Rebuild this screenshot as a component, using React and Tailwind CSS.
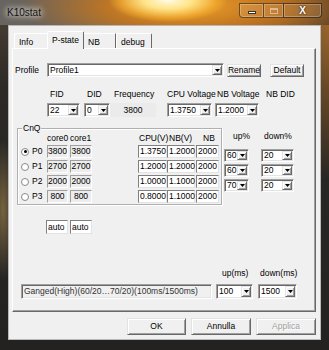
import React from "react";

const sunken =
  "border border-t-[#a0a0a0] border-l-[#a0a0a0] border-r-white border-b-white shadow-[inset_1px_1px_0_#696969,inset_-1px_-1px_0_#e3e3e3]";
const raised =
  "border border-t-[#e3e3e3] border-l-[#e3e3e3] border-r-[#696969] border-b-[#696969] shadow-[inset_1px_1px_0_#fff,inset_-1px_-1px_0_#a0a0a0]";

const Arrow = () => (
  <svg width="5" height="3" viewBox="0 0 5 3">
    <path d="M0 0h5L2.5 3z" fill="#000" />
  </svg>
);

const Combo = ({ value, className }) => (
  <div className={`flex p-[1px] bg-white ${sunken} ${className}`}>
    <span className="flex-1 self-center pl-[1px] whitespace-nowrap">{value}</span>
    <span className={`flex w-[10px] items-center justify-center bg-[#f0f0f0] ${raised}`}>
      <Arrow />
    </span>
  </div>
);

const Button = ({ children, className, disabled }) => (
  <div
    className={`flex items-center justify-center bg-[#f0f0f0] ${raised} ${
      disabled ? "text-[#a0a0a0] [text-shadow:1px_1px_0_#fff]" : ""
    } ${className}`}
  >
    {children}
  </div>
);

const rows = [
  { p: "P0", c0: "3800", c1: "3800", v: "1.3750", nbv: "1.2000", nb: "2000", on: true },
  { p: "P1", c0: "2700", c1: "2700", v: "1.2000", nbv: "1.2000", nb: "2000" },
  { p: "P2", c0: "2000", c1: "2000", v: "1.0000", nbv: "1.1000", nb: "2000" },
  { p: "P3", c0: "800", c1: "800", v: "0.8000", nbv: "1.1000", nb: "2000" },
];

const ups = [
  ["60", "20"],
  ["60", "20"],
  ["70", "20"],
];

const coreCell =
  "flex items-center justify-center bg-[#ececec] border border-t-[#a0a0a0] border-l-[#a0a0a0] border-r-white border-b-white";
const editCell =
  "flex items-center pl-[1px] bg-white border border-t-[#808080] border-l-[#808080] border-r-[#e3e3e3] border-b-[#e3e3e3]";

export default function App() {
  return (
    <div className="w-[329px] h-[350px] overflow-hidden bg-[radial-gradient(ellipse_60px_160px_at_329px_20px,rgba(190,120,40,0.7)_0%,transparent_100%),radial-gradient(ellipse_14px_70px_at_3px_210px,rgba(170,140,80,0.6)_0%,transparent_100%),linear-gradient(180deg,#4e4236_0%,#2c2926_25%,#232221_100%)] font-['Liberation_Sans',Arial,sans-serif] text-[8.5px] leading-none text-black">
      {/* title bar */}
      <div className="flex h-[25px] items-start bg-[radial-gradient(ellipse_60px_22px_at_168px_0px,#fffbe6_0%,#ffe58a_40%,rgba(250,180,50,0.6)_80%,transparent_100%),radial-gradient(ellipse_170px_45px_at_190px_6px,#eda02a_0%,rgba(200,120,30,0.85)_50%,transparent_100%),linear-gradient(90deg,#67635e_0%,#6c6258_30%,#8a5e2c_55%,#8a5828_80%,#56402c_100%)]">
        <span className="ml-[7px] mt-[8px] text-[10px] text-[#111] [text-shadow:0_0_5px_#fff,0_0_8px_#fff]">
          K10stat
        </span>
        <div className="ml-auto mr-[7px] mt-[3px] flex h-[15px]">
          <div className="flex w-[24px] items-center justify-center rounded-bl-[4px] border border-r-0 border-[rgba(40,30,20,0.6)] bg-[rgba(255,255,255,0.1)] shadow-[inset_0_0_0_1px_rgba(255,255,255,0.25)]">
            <div className="mt-[3px] h-[3px] w-[8px] border border-[#333] bg-white" />
          </div>
          <div className="flex w-[20px] items-center justify-center border border-r-0 border-[rgba(40,30,20,0.6)] bg-[rgba(255,255,255,0.1)] shadow-[inset_0_0_0_1px_rgba(255,255,255,0.25)]">
            <div className="h-[6px] w-[8px] border border-t-2 border-[rgba(255,255,255,0.45)]" />
          </div>
          <div className="flex w-[39px] items-center justify-center rounded-br-[4px] border border-[rgba(40,30,20,0.7)] bg-[rgba(255,255,255,0.08)] shadow-[inset_0_0_0_1px_rgba(255,255,255,0.25)]">
            <span className="text-[10px] font-bold text-white [text-shadow:0_0_2px_#000]">X</span>
          </div>
        </div>
      </div>

      {/* client area */}
      <div className="mx-[8px] h-[315px] border border-[#b8b8b8] bg-[#f0f0f0] px-[3px] pt-[6px]">
        {/* tabs */}
        <div className="ml-[2px] flex h-[16px] items-end">
          <div className="h-[15px] w-[33px] rounded-tl-[2px] border-l border-t border-white pl-[4px] pt-[4px]">Info</div>
          <div className="relative z-10 -mb-[1px] h-[18px] w-[37px] rounded-t-[2px] border-l border-t border-r border-l-white border-t-white border-r-[#696969] bg-[#f0f0f0] pl-[4px] pt-[4px]">
            P-state
          </div>
          <div className="h-[15px] w-[32px] border-t border-r border-t-white border-r-[#696969] pl-[4px] pt-[4px]">NB</div>
          <div className="h-[15px] w-[36px] rounded-tr-[2px] border-l border-t border-r border-l-white border-t-white border-r-[#696969] pl-[4px] pt-[4px]">
            debug
          </div>
        </div>

        {/* tab panel */}
        <div className="h-[264px] w-[304px] border border-t-white border-l-white border-r-[#696969] border-b-[#696969] shadow-[inset_-1px_-1px_0_#a0a0a0]">
          {/* profile */}
          <div className="mt-[14px] flex h-[14px] items-center">
            <span className="ml-[2px] w-[32px]">Profile</span>
            <Combo value="Profile1" className="h-[14px] w-[177px]" />
            <Button className="ml-[3px] h-[13px] w-[34px]">Rename</Button>
            <Button className="ml-[9px] h-[13px] w-[34px]">Default</Button>
          </div>

          {/* labels */}
          <div className="mt-[12px] flex h-[10px] items-center whitespace-nowrap">
            <span className="ml-[37px] w-[37px]">FID</span>
            <span className="w-[27px]">DID</span>
            <span className="w-[53px]">Frequency</span>
            <span className="w-[50px]">CPU Voltage</span>
            <span className="w-[49px]">NB Voltage</span>
            <span>NB DID</span>
          </div>

          {/* combos */}
          <div className="mt-[4px] flex h-[14px]">
            <Combo value="22" className="ml-[34px] w-[33px]" />
            <Combo value="0" className="ml-[4px] w-[26px]" />
            <div className="flex w-[46px] items-center justify-center bg-[#ebebeb]">3800</div>
            <Combo value="1.3750" className="ml-[11px] w-[45px]" />
            <Combo value="1.2000" className="ml-[3px] w-[44px]" />
          </div>

          {/* CnQ + up/down */}
          <div className="mt-[11px] flex">
            <div className="relative ml-[4px] h-[77px] w-[205px] border border-[#b0b0b0] shadow-[1px_1px_0_#fff,inset_1px_1px_0_#fff]">
              <span className="absolute -top-[5px] left-[4px] bg-[#f0f0f0] px-[1px]">CnQ</span>
              <div className="mt-[4px] flex h-[10px] items-center">
                <span className="ml-[29px] w-[23px]">core0</span>
                <span className="w-[69px]">core1</span>
                <span className="w-[30px]">CPU(V)</span>
                <span className="w-[34px]">NB(V)</span>
                <span>NB</span>
              </div>
              <div className="mt-[2px] flex flex-col gap-[2px]">
                {rows.map((r) => (
                  <div key={r.p} className="flex h-[13px] items-stretch">
                    <div className="ml-[3px] flex w-[8px] items-center">
                      <div className="flex h-[8px] w-[8px] items-center justify-center rounded-full border border-[#8a8a8a] bg-white">
                        {r.on && <div className="h-[3px] w-[3px] rounded-full bg-black" />}
                      </div>
                    </div>
                    <span className="ml-[3px] flex w-[15px] items-center">{r.p}</span>
                    <div className={`w-[21px] ${coreCell}`}>{r.c0}</div>
                    <div className={`ml-[2px] w-[22px] ${coreCell}`}>{r.c1}</div>
                    <div className={`ml-[46px] w-[29px] ${editCell}`}>{r.v}</div>
                    <div className={`w-[28px] ${editCell}`}>{r.nbv}</div>
                    <div className={`ml-[1px] w-[23px] ${editCell}`}>{r.nb}</div>
                  </div>
                ))}
              </div>
            </div>

            <div className="ml-[2px]">
              <div className="mt-[3px] flex h-[10px] items-center">
                <span className="ml-[9px] w-[31px]">up%</span>
                <span>down%</span>
              </div>
              <div className="mt-[8px] flex flex-col gap-[2px]">
                {ups.map(([u, d], i) => (
                  <div key={i} className="flex h-[13px]">
                    <Combo value={u} className="w-[25px]" />
                    <Combo value={d} className="ml-[12px] w-[33px]" />
                  </div>
                ))}
              </div>
            </div>
          </div>

          {/* auto */}
          <div className="mt-[15px] flex h-[14px]">
            <div className={`ml-[33px] w-[22px] ${editCell}`}>auto</div>
            <div className={`ml-[2px] w-[22px] ${editCell}`}>auto</div>
          </div>

          {/* up(ms) labels */}
          <div className="mt-[34px] flex h-[10px] items-center">
            <span className="ml-[209px] w-[38px]">up(ms)</span>
            <span>down(ms)</span>
          </div>

          {/* ganged */}
          <div className="mt-[6px] flex h-[15px]">
            <div className={`ml-[8px] flex w-[191px] items-center bg-[#f0f0f0] pl-[2px] text-[#333] whitespace-nowrap ${sunken}`}>
              Ganged(High)(60/20…70/20)(100ms/1500ms)
            </div>
            <Combo value="100" className="ml-[4px] w-[37px]" />
            <Combo value="1500" className="ml-[5px] w-[39px]" />
          </div>
        </div>

        {/* dialog buttons */}
        <div className="mt-[6px] flex h-[17px]">
          <Button className="ml-[115px] w-[59px]">OK</Button>
          <Button className="ml-[5px] w-[60px]">Annulla</Button>
          <Button className="ml-[5px] w-[60px]" disabled>
            Applica
          </Button>
        </div>
      </div>
    </div>
  );
}
